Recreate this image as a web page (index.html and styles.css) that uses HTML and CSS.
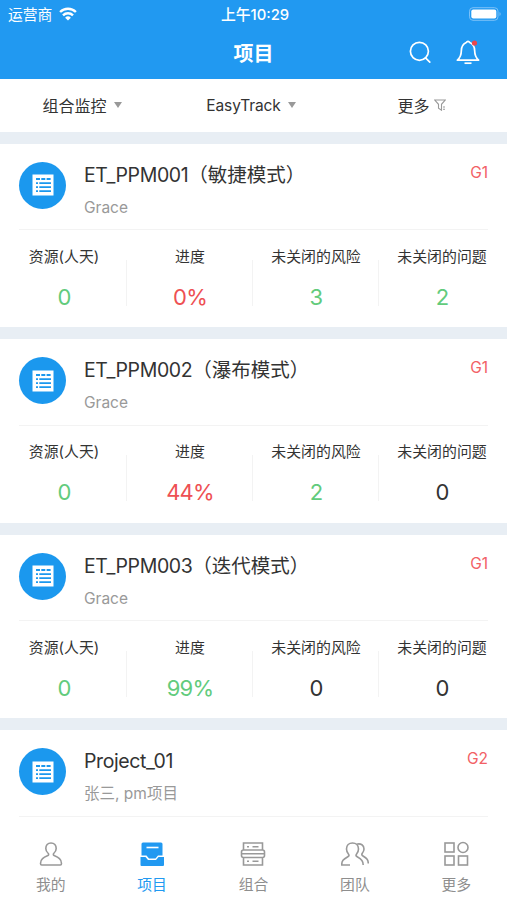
FILE: index.html
```html
<!DOCTYPE html>
<html lang="zh-CN">
<head>
    <meta charset="UTF-8">
    <meta name="viewport" content="width=device-width, initial-scale=1">
    <title>项目</title>
    <link rel="stylesheet" href="styles.css">
</head>
<body>
    <svg class="sprite" width="0" height="0">
        <symbol id="icon-list" viewBox="0 0 22 22">
            <rect x="0.5" y="0.5" width="21" height="21" fill="#fff"/>
            <path d="M4 5h4M9.3 5h4M14.600 5h4M4 9.200h2M7.300 9.200h11.700M4 13.200h2M7.300 13.200h11.700M4 17.200h2M7.300 17.200h11.700" stroke="#1b98ee" stroke-width="1.8"/>
        </symbol>
    </svg>

    <header class="header">
        <div class="status-bar">
            <div class="carrier">
                <span>运营商</span>
                <svg width="18" height="14" viewBox="0 0 18 14" fill="none" stroke="#fff" stroke-width="2.4">
                    <path d="M1.100 5a11.200 11.200 0 0 1 15.800 0M4 8.300a7 7 0 0 1 10 0"/>
                    <path d="M9 13.600L6.100 10.700a4.100 4.100 0 0 1 5.800 0z" fill="#fff" stroke="none"/>
                </svg>
            </div>
            <span class="time">上午10:29</span>
            <div class="battery">
                <svg width="34" height="14" viewBox="0 0 34 14">
                    <rect x="1.500" y="0.700" width="28.500" height="12.600" rx="3.500" fill="none" stroke="#7cc1f8" stroke-width="1"/>
                    <rect x="3.300" y="2.500" width="25" height="9" rx="2" fill="#fff"/>
                    <path d="M31.500 5v4c1.600-.6 1.600-3.400 0-4z" fill="#7cc1f8"/>
                </svg>
            </div>
        </div>
        <div class="nav-bar">
            <h1>项目</h1>
            <div class="nav-actions">
                <svg width="24" height="24" viewBox="0 0 24 24" fill="none" stroke="#fff" stroke-width="1.7">
                    <circle cx="11.4" cy="11.3" r="9"/>
                    <path d="M17.5 17.8l4.300 4.300" stroke-linecap="round"/>
                </svg>
                <svg width="24" height="26" viewBox="0 0 24 26" fill="none" stroke="#fff" stroke-width="1.7" stroke-linejoin="round">
                    <path d="M12 2.300c.8 0 1.100.8 1.800 1.200 3.600 1.600 4.900 4.300 4.900 8.500 0 4.600.8 6.300 3.900 9.200H1.400C4.500 18.300 5.300 16.600 5.300 12c0-4.200 1.300-6.900 4.900-8.500.7-.4 1-1.200 1.800-1.200z"/>
                    <path d="M8.500 24.200h7"/>
                    <circle cx="18.500" cy="4" r="2.600" fill="#e9474b" stroke="none"/>
                </svg>
            </div>
        </div>
    </header>

    <div class="filter-bar">
        <div class="filter">组合监控<span class="caret"></span></div>
        <div class="filter latin">EasyTrack<span class="caret"></span></div>
        <div class="filter">更多
            <svg class="funnel" width="12" height="12" viewBox="0 0 12 12" fill="none" stroke="#999" stroke-width="1.1">
                <path d="M.8 1h10.400L7.500 5.300v5.900L4.500 9.300v-4zM9 8h2M9 10.200h2"/>
            </svg>
        </div>
    </div>

    <main class="project-list">
        <section class="card">
            <div class="card-head">
                <div class="avatar"><svg width="22" height="22"><use href="#icon-list"/></svg></div>
                <div class="info">
                    <h2>ET_PPM001<span>（敏捷模式）</span></h2>
                    <p>Grace</p>
                </div>
                <span class="grade">G1</span>
            </div>
            <div class="stats">
                <div class="stat"><label>资源(人天)</label><b class="green">0</b></div>
                <div class="stat"><label>进度</label><b class="red">0%</b></div>
                <div class="stat"><label>未关闭的风险</label><b class="green">3</b></div>
                <div class="stat"><label>未关闭的问题</label><b class="green">2</b></div>
            </div>
        </section>

        <section class="card">
            <div class="card-head">
                <div class="avatar"><svg width="22" height="22"><use href="#icon-list"/></svg></div>
                <div class="info">
                    <h2>ET_PPM002<span>（瀑布模式）</span></h2>
                    <p>Grace</p>
                </div>
                <span class="grade">G1</span>
            </div>
            <div class="stats">
                <div class="stat"><label>资源(人天)</label><b class="green">0</b></div>
                <div class="stat"><label>进度</label><b class="red">44%</b></div>
                <div class="stat"><label>未关闭的风险</label><b class="green">2</b></div>
                <div class="stat"><label>未关闭的问题</label><b>0</b></div>
            </div>
        </section>

        <section class="card">
            <div class="card-head">
                <div class="avatar"><svg width="22" height="22"><use href="#icon-list"/></svg></div>
                <div class="info">
                    <h2>ET_PPM003<span>（迭代模式）</span></h2>
                    <p>Grace</p>
                </div>
                <span class="grade">G1</span>
            </div>
            <div class="stats">
                <div class="stat"><label>资源(人天)</label><b class="green">0</b></div>
                <div class="stat"><label>进度</label><b class="green">99%</b></div>
                <div class="stat"><label>未关闭的风险</label><b>0</b></div>
                <div class="stat"><label>未关闭的问题</label><b>0</b></div>
            </div>
        </section>

        <section class="card">
            <div class="card-head">
                <div class="avatar"><svg width="22" height="22"><use href="#icon-list"/></svg></div>
                <div class="info">
                    <h2>Project_01</h2>
                    <p>张三, pm项目</p>
                </div>
                <span class="grade">G2</span>
            </div>
        </section>
    </main>

    <nav class="tab-bar">
        <a class="tab">
            <svg width="28" height="28" viewBox="0 0 28 28">
                <path d="M14 3c-3.300 0-5.200 2.500-5.200 5.500 0 2.200 1 3.700 2.500 5 .6.600.4 1.700-.4 2.100C6.500 17.600 3.500 19 3.500 23.500c0 1 .3 1.500 1.200 1.500h18.600c.9 0 1.200-.5 1.200-1.500 0-4.500-3-5.900-7.400-7.900-.8-.4-1-1.500-.4-2.100 1.500-1.300 2.500-2.800 2.500-5C19.200 5.500 17.300 3 14 3z"/>
            </svg>
            <span>我的</span>
        </a>
        <a class="tab active">
            <svg width="28" height="28" viewBox="0 0 28 28">
                <path class="solid" d="M5 2.500h18q1.500 0 1.500 1.500V15.500h-4.500l-2.500 3h-6.500l-2.500-3H3.500V4q0-1.500 1.500-1.500z"/>
                <path class="solid" d="M2.500 17h5l2.500 3h8l2.500-3h5.500v8q0 1-1 1h-21.500q-1 0-1-1z"/>
                <path class="cut" d="M8.500 7.500h12"/>
            </svg>
            <span>项目</span>
        </a>
        <a class="tab">
            <svg width="28" height="28" viewBox="0 0 28 28">
                <path d="M4.500 10V3h19v7M4.500 17.500V25h19v-7.500M4.500 10h19q2 0 2 2v3.500q0 2-2 2h-19q-2 0-2-2V12q0-2 2-2zM2.500 13.700h23M8 6.700h2M13.500 6.700h6M8 21.300h2M13.500 21.300h6"/>
            </svg>
            <span>组合</span>
        </a>
        <a class="tab">
            <svg width="28" height="28" viewBox="0 0 28 28">
                <path d="M9 25H.800c-.3-4.200 1.500-5.500 6-8.200 1.400-.8 1.500-1.700.6-2.800-1-1.200-1.900-2.800-1.900-5C5.500 5.500 8 3 11.500 3S17.500 5.500 17.500 9c0 2.200-.9 3.800-1.900 5-.9 1.100-.8 2 .6 2.800 4.500 2.700 6 4.200 6 8.200M15.500 4.200c4.500-1.200 7.500 1 7.500 4.800 0 1.900-.8 3.200-1.700 4.300-.8 1.100-.6 2 .7 2.700 4 2.400 5.200 3.800 5.300 7.500"/>
            </svg>
            <span>团队</span>
        </a>
        <a class="tab">
            <svg width="28" height="28" viewBox="0 0 28 28">
                <rect x="3" y="3" width="9" height="9"/>
                <circle cx="21" cy="7.500" r="5"/>
                <rect x="3" y="16" width="9" height="9"/>
                <rect x="16.500" y="16" width="9" height="9"/>
            </svg>
            <span>更多</span>
        </a>
    </nav>
</body>
</html>
```
FILE: styles.css
```css
* {
    box-sizing: border-box;
}

body {
    margin: 0;
    height: 900px;
    overflow: hidden;
    display: flex;
    flex-direction: column;
    font-family: Inter, "Noto Sans CJK SC", sans-serif;
    background-color: #e8eef4;
    color: #333;
}

h1, h2, p {
    margin: 0;
    font-weight: normal;
}

svg {
    display: block;
    flex-shrink: 0;
}

.sprite {
    position: absolute;
}

.header {
    height: 79px;
    flex-shrink: 0;
    background-color: #2199f1;
    color: #fff;
}

.status-bar {
    display: grid;
    grid-template-columns: 1fr auto 1fr;
    align-items: center;
    height: 27px;
    padding: 0 5px 0 8px;
    font-size: 14.8px;
}

.carrier {
    display: flex;
    align-items: center;
    gap: 7px;
}

.time {
    font-size: 14.8px;
    font-weight: 500;
}

.battery {
    display: flex;
    justify-content: flex-end;
}

.nav-bar {
    display: grid;
    grid-template-columns: 1fr auto 1fr;
    align-items: center;
    height: 50px;
}

.nav-bar h1 {
    grid-column: 2;
    font-size: 20px;
    font-weight: 600;
}

.nav-actions {
    display: flex;
    align-items: center;
    justify-content: flex-end;
    gap: 24px;
    padding-right: 27px;
}

.filter-bar {
    display: grid;
    grid-template-columns: repeat(3, 1fr);
    height: 52.5px;
    flex-shrink: 0;
    background-color: #fff;
    font-size: 16px;
}

.filter {
    display: flex;
    align-items: center;
    justify-content: center;
    padding-right: 5px;
}

.filter.latin {
    font-size: 15.5px;
    letter-spacing: -0.1px;
}

.filter:last-child {
    padding-right: 2px;
}

.caret {
    margin-left: 7px;
    border: 4px solid transparent;
    border-top: 6px solid #999;
    border-bottom: none;
}

.funnel {
    margin-left: 4px;
}

.project-list {
    flex: 1;
    min-height: 0;
    overflow: hidden;
    padding-top: 12.2px;
}

.card {
    height: 183.5px;
    margin-bottom: 12px;
    background-color: #fff;
}

.card-head {
    display: flex;
    height: 86.5px;
    margin: 0 19px;
    padding-top: 18px;
    border-bottom: 1px solid #f3f3f3;
}

.avatar {
    display: flex;
    align-items: center;
    justify-content: center;
    width: 47px;
    height: 47px;
    margin-right: 18px;
    border-radius: 50%;
    background-color: #1b98ee;
}

.info {
    flex: 1;
}

.info h2 {
    font-size: 19.5px;
    line-height: 26px;
    letter-spacing: -0.4px;
}

.info h2 span {
    letter-spacing: 0;
}

.info p {
    margin-top: 8px;
    font-size: 15.5px;
    line-height: 24px;
    color: #999;
}

.grade {
    font-size: 15.5px;
    line-height: 21px;
    color: #f26065;
}

.stats {
    display: grid;
    grid-template-columns: repeat(4, 126px);
    padding: 13.5px 0 0 1px;
}

.stat {
    display: flex;
    flex-direction: column;
    align-items: center;
    background: linear-gradient(#f3f3f3, #f3f3f3) no-repeat right 16px / 1px 46px;
}

.stat:last-child {
    background: none;
}

.stat label {
    font-size: 14.9px;
    line-height: 26px;
}

.stat b {
    margin-top: 12px;
    font-size: 22px;
    font-weight: normal;
    line-height: 30px;
    letter-spacing: -0.8px;
}

.stat .green {
    color: #62cb7c;
}

.stat .red {
    color: #ee5053;
}

.tab-bar {
    display: grid;
    grid-template-columns: repeat(5, 1fr);
    height: 82px;
    flex-shrink: 0;
    background-color: #fff;
}

.tab {
    display: flex;
    flex-direction: column;
    align-items: center;
    padding-top: 22px;
    font-size: 14.8px;
    line-height: 22px;
    color: #8e8e8e;
}

.tab svg {
    fill: none;
    stroke: #999;
    stroke-width: 1.6;
}

.tab span {
    margin-top: 6px;
}

.tab.active {
    color: #2199f1;
}

.tab .solid {
    fill: #2199f1;
    stroke: none;
}

.tab .cut {
    stroke: #fff;
}
```
